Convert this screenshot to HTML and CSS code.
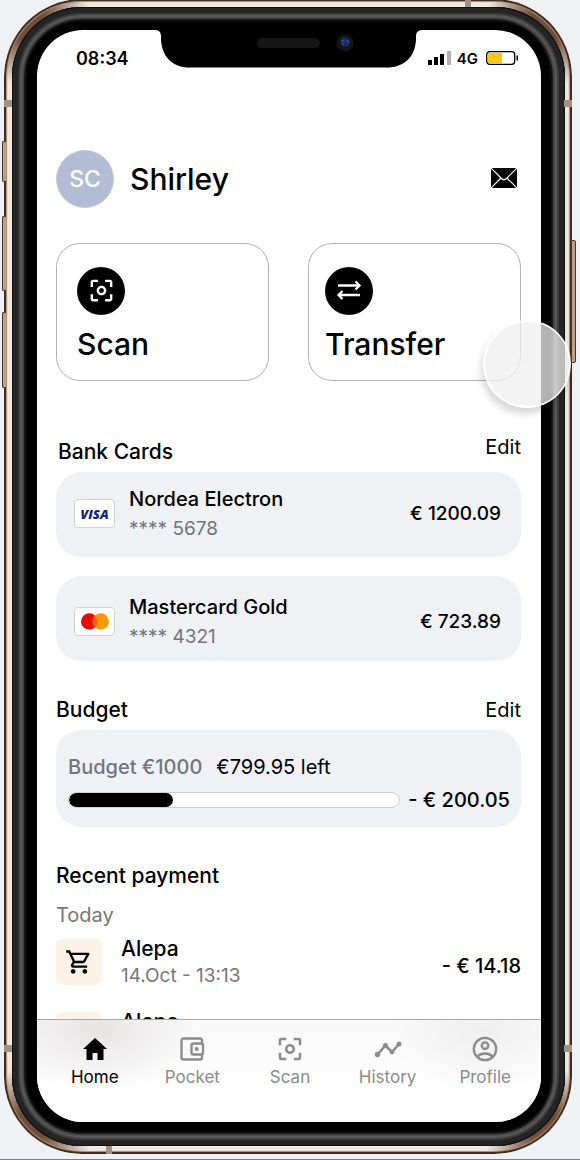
FILE: index.html
```html
<!DOCTYPE html>
<html lang="en">
<head>
<meta charset="utf-8">
<meta name="viewport" content="width=device-width, initial-scale=1">
<title>Wallet</title>
<link rel="stylesheet" href="styles.css">
</head>
<body>
<svg class="symbols" aria-hidden="true">
  <symbol id="focus" viewBox="0 0 24 24"><path d="M5 15H3v4c0 1.1.9 2 2 2h4v-2H5v-4zM5 5h4V3H5c-1.1 0-2 .9-2 2v4h2V5zm14-2h-4v2h4v4h2V5c0-1.1-.9-2-2-2zm0 16h-4v2h4c1.1 0 2-.9 2-2v-4h-2v4zM12 8c-2.21 0-4 1.79-4 4s1.79 4 4 4 4-1.79 4-4-1.79-4-4-4zm0 6c-1.1 0-2-.9-2-2s.9-2 2-2 2 .9 2 2-.9 2-2 2z"/></symbol>
  <symbol id="cart" viewBox="0 0 24 24"><path d="M15.55 13c.75 0 1.41-.41 1.75-1.03l3.58-6.49c.37-.66-.11-1.48-.87-1.48H5.21l-.94-2H1v2h2l3.6 7.59-1.35 2.44C4.52 15.37 5.48 17 7 17h12v-2H7l1.1-2h7.45zM6.16 6h12.15l-2.76 5H8.53L6.16 6zM7 18c-1.1 0-1.99.9-1.99 2S5.9 22 7 22s2-.9 2-2-.9-2-2-2zm10 0c-1.1 0-1.99.9-1.99 2s.89 2 1.99 2 2-.9 2-2-.9-2-2-2z"/></symbol>
</svg>
<div class="device">
  <span class="key key-mute"></span>
  <span class="key key-up"></span>
  <span class="key key-down"></span>
  <span class="key key-power"></span>
  <span class="seam seam-left-top"></span>
  <span class="seam seam-left-bottom"></span>
  <span class="seam seam-right-top"></span>
  <span class="seam seam-right-bottom"></span>
  <span class="seam seam-top"></span>
  <span class="seam seam-bottom"></span>
  <div class="bezel">
    <div class="screen">
      <svg class="notch" viewBox="0 0 268 38" aria-hidden="true">
        <path d="M0 0H268C263 0 261 2 261 7V10C260 27 249 37.500 232 37.500H34C18 37.500 7 27 6 10V7C6 2 4 0 0 0Z" fill="#000"/>
        <rect x="102" y="8" width="63" height="10" rx="5" fill="#161616"/>
        <circle cx="190" cy="13" r="8.500" fill="#14151a"/>
        <circle cx="190" cy="12" r="4.500" fill="#1c2c66"/>
        <path d="M186 11h3M192 10l2 3M187 14h2" stroke="#3c5cc0"/>
      </svg>
      <header class="status">
        <time class="clock">08:34</time>
        <div class="signals">
          <svg width="23" height="14" viewBox="0 0 23 14" aria-hidden="true">
            <path d="M0 9h4v5H0zM6 6h4v8H6zM12 3h4v11h-4z"/><path d="M19 0h4v14h-4z" fill="#b0b0b0"/>
          </svg>
          <span class="network">4G</span>
          <svg width="33" height="14" viewBox="0 0 33 14" aria-hidden="true">
            <rect x=".7" y=".7" width="28" height="12.600" rx="3" fill="#fff" stroke="#000" stroke-width="1.300"/>
            <path d="M3 2h13v10H3a1 1 0 0 1-1-1V3a1 1 0 0 1 1-1z" fill="#fac515"/><path d="M30.500 4.500h1.500v5h-1.500z"/>
          </svg>
        </div>
      </header>

      <main class="content">
        <div class="profile">
          <span class="avatar">SC</span>
          <h1 class="name">Shirley</h1>
          <button class="mail" aria-label="Messages">
            <svg width="26" height="20" viewBox="0 0 26 20"><path d="M0 0h26v20H0z"/><path class="line" d="M0 0l10.500 10.500Q13 13 15.500 10.500L26 0M0 20l9.500-9.500M26 20l-9.500-9.500" stroke="#fff" stroke-width="1.200"/></svg>
          </button>
        </div>

        <div class="actions">
          <button class="action">
            <span class="disc"><svg width="29" height="29"><use href="#focus"/></svg></span>
            <span>Scan</span>
          </button>
          <button class="action action-transfer">
            <span class="disc"><svg width="26" height="22" viewBox="0 0 26 22"><path class="line" d="M2 6.500h21M19.500 2.500l4 4-4 4M24 16H3M6.500 12l-4 4 4 4" stroke="#fff" stroke-width="2.300"/></svg></span>
            <span>Transfer</span>
          </button>
        </div>

        <section class="section cards">
          <div class="section-head">
            <h2 class="title">Bank Cards</h2>
            <button class="edit edit-high">Edit</button>
          </div>
          <div class="card-list">
            <article class="card">
              <span class="brand"><span class="visa">VISA</span></span>
              <div class="card-info"><h3 class="card-name">Nordea Electron</h3><p class="card-number">**** 5678</p></div>
              <span class="amount">€ 1200.09</span>
            </article>
            <article class="card">
              <span class="brand"><svg width="28" height="17" viewBox="0 0 28 17"><circle cx="8.300" cy="8.500" r="8.300" fill="#eb0a0a"/><circle cx="19.700" cy="8.500" r="8.300" fill="#f39a0b"/><path d="M14 2.500a8.300 8.300 0 0 1 0 12a8.300 8.300 0 0 1 0-12z" fill="#ff5f00"/></svg></span>
              <div class="card-info"><h3 class="card-name">Mastercard Gold</h3><p class="card-number">**** 4321</p></div>
              <span class="amount">€ 723.89</span>
            </article>
          </div>
        </section>

        <section class="section">
          <div class="section-head">
            <h2 class="title">Budget</h2>
            <button class="edit">Edit</button>
          </div>
          <div class="budget">
            <p class="budget-text"><label for="spent" class="budget-total">Budget €1000</label><span>€799.95 left</span></p>
            <div class="budget-row">
              <progress class="bar" id="spent" max="1000" value="316"></progress>
              <span class="amount">- € 200.05</span>
            </div>
          </div>
        </section>

        <section class="section recent">
          <h2 class="title">Recent payment</h2>
          <h3 class="day">Today</h3>
          <ul class="payments">
            <li class="payment">
              <span class="shop"><svg width="28" height="28"><use href="#cart"/></svg></span>
              <div class="payment-info"><p class="payee">Alepa</p><p class="date">14.Oct - 13:13</p></div>
              <span class="amount">- € 14.18</span>
            </li>
            <li class="payment">
              <span class="shop"><svg width="28" height="28"><use href="#cart"/></svg></span>
              <div class="payment-info"><p class="payee">Alepa</p></div>
            </li>
          </ul>
        </section>
      </main>

      <nav class="tabs">
        <a class="tab tab-active" href="#home">
          <svg width="30" height="30" viewBox="0 0 30 30"><path d="M15 4L27 15h-3.500v11h-6v-7h-5v7h-6V15H3z"/></svg>
          Home
        </a>
        <a class="tab" href="#pocket">
          <svg class="line" width="30" height="30" viewBox="0 0 30 30" stroke="currentColor" stroke-width="2.400"><path d="M25 9.500V6.500a2 2 0 0 0-2-2H6.500a2 2 0 0 0-2 2v17a2 2 0 0 0 2 2H23a2 2 0 0 0 2-2V20.500"/><rect x="14.500" y="9.500" width="11.500" height="11" rx="2"/><circle cx="19.700" cy="15" r=".9"/></svg>
          Pocket
        </a>
        <a class="tab" href="#scan">
          <svg width="30" height="30"><use href="#focus"/></svg>
          Scan
        </a>
        <a class="tab" href="#history">
          <svg width="30" height="30" viewBox="0 0 30 30"><path class="line" d="M4.500 20.500l8-9 6.500 6.500 7-8" stroke="currentColor" stroke-width="2.600"/><circle cx="4.500" cy="20.500" r="2.700"/><circle cx="12.500" cy="11.500" r="2.500"/><circle cx="19" cy="18" r="2.300"/><circle cx="26" cy="10" r="2.500"/></svg>
          History
        </a>
        <a class="tab" href="#profile">
          <svg class="line" width="30" height="30" viewBox="0 0 30 30" stroke="currentColor" stroke-width="2.300"><circle cx="15" cy="15" r="11.200"/><circle cx="15" cy="11.700" r="3.300"/><path d="M7.500 22.500C11 18.500 19 18.500 22.500 22.500"/></svg>
          Profile
        </a>
      </nav>
    </div>
  </div>
  <span class="touch"></span>
</div>
</body>
</html>
```
FILE: styles.css
```css
* { box-sizing: border-box; }

body {
  margin: 0;
  height: 100vh;
  padding: 0 8px 5px 4px;
  display: flex;
  background: #f0f1f5;
  border-bottom: 1px solid #7d7d80;
  font-family: Inter, "Noto Sans", sans-serif;
  font-size: 20px;
  color: #000;
  overflow: hidden;
}

h1, h2, h3, p, ul { margin: 0; padding: 0; font-weight: 500; font-size: inherit; }
ul { list-style: none; }
button { font: inherit; color: inherit; background: none; border: 0; padding: 0; cursor: pointer; }
svg { display: block; fill: currentColor; }
.line { fill: none; }
.symbols { position: absolute; width: 0; height: 0; }

/* Phone body */
.device {
  position: relative;
  flex: 1;
  min-width: 0;
  display: flex;
  margin-top: -1px;
  padding: 8px 7px 8px 8px;
  border-radius: 78px;
  background:
    radial-gradient(circle at 20px 20px, #704e3b 20px, transparent 66px),
    radial-gradient(circle at calc(100% - 20px) 20px, #704e3b 20px, transparent 66px),
    radial-gradient(circle at 20px calc(100% - 20px), #704e3b 20px, transparent 66px),
    radial-gradient(circle at calc(100% - 20px) calc(100% - 20px), #704e3b 20px, transparent 66px),
    #f1e8e0;
  box-shadow: inset 0 0 0 2px #3f2d22, inset 0 0 1px 3px #a58872;
}

.bezel {
  flex: 1;
  min-width: 0;
  display: flex;
  padding: 23px 24px 24px 25px;
  border-radius: 70px;
  background: #000;
  box-shadow:
    inset 0 0 0 1px #111,
    inset 0 0 0 6px #242424,
    inset 0 0 1px 8px #3c3c3c,
    inset 0 0 1px 10px #5a5a5a,
    inset 0 0 1px 12px #484848,
    inset 0 0 2px 14px #181818;
}

.screen {
  position: relative;
  flex: 1;
  min-width: 0;
  display: flex;
  flex-direction: column;
  overflow: hidden;
  border-radius: 46px;
  background: #fff;
}

.key {
  position: absolute;
  left: -2px;
  width: 4px;
  background: #c09e87;
  border: 1px solid #4a3529;
  border-right: 0;
  border-radius: 2px 0 0 2px;
}
.key-mute { top: 142px; height: 41px; }
.key-up { top: 217px; height: 75px; }
.key-down { top: 313px; height: 76px; }
.key-power { top: 241px; height: 123px; left: auto; right: -4px; width: 5px; border: 1px solid #4a3529; border-radius: 0 2px 2px 0; }

.seam { position: absolute; width: 8px; height: 7px; background: #a39182; }
.seam-left-top { left: 0; top: 101px; }
.seam-left-bottom { left: 0; bottom: 102px; }
.seam-right-top { right: 0; top: 101px; }
.seam-right-bottom { right: 0; bottom: 102px; }
.seam-top { width: 6px; height: 8px; top: 0; right: 101px; }
.seam-bottom { width: 6px; height: 8px; bottom: 0; left: 102px; }

.notch { position: absolute; z-index: 1; top: 0; left: 50%; width: 268px; height: 38px; margin-left: -134px; }

.touch {
  position: absolute;
  z-index: 2;
  top: 321px;
  right: 1px;
  width: 88px;
  height: 88px;
  border: 2px solid rgba(255, 255, 255, .95);
  border-radius: 50%;
  background: rgba(239, 239, 239, .75);
  background-clip: padding-box;
  box-shadow: -2px 6px 7px rgba(0, 0, 0, .16);
}

/* Status bar */
.status { flex: none; display: flex; justify-content: space-between; align-items: center; height: 56px; padding: 0 22px 0 39px; }
.clock { font-weight: 600; font-size: 18px; }
.signals { display: flex; align-items: center; gap: 6px; }
.network { font-weight: 600; font-size: 15px; }
.signals svg:last-child { margin-left: 2px; }

/* Scrolling page */
.content { flex: 1; min-height: 0; overflow-y: auto; scrollbar-width: none; padding: 64px 20px 0 19px; }

.profile { display: flex; align-items: center; gap: 16px; }
.avatar { display: flex; align-items: center; justify-content: center; width: 58px; height: 58px; border-radius: 50%; border: 1px solid #c8c8cc; background: #b2bdd5; color: #fff; font-size: 23px; font-weight: 500; }
.name { font-size: 30px; line-height: 40px; }
.mail { margin-left: auto; margin-right: 4px; padding-bottom: 2px; }

.actions { display: grid; grid-template-columns: 1fr 1fr; gap: 39px; margin-top: 35px; }
.action { display: flex; flex-direction: column; align-items: flex-start; gap: 8px; padding: 23px 20px 15px; border: 1px solid #b3b3b3; border-radius: 24px; font-size: 30px; line-height: 42px; font-weight: 500; }
.action-transfer { padding-left: 16px; }
.disc { display: flex; align-items: center; justify-content: center; width: 48px; height: 48px; padding-bottom: 2px; border-radius: 50%; background: #000; color: #fff; }

.section { margin-top: 29px; }
.cards { margin-top: 51px; }
.section-head { display: flex; justify-content: space-between; height: 40px; line-height: 40px; }
.title { font-size: 21px; }
.cards .title { padding-left: 2px; }
.edit-high { line-height: 30px; align-self: flex-start; }

.card-list { display: grid; gap: 19px; }
.card { display: flex; align-items: center; gap: 14px; height: 85px; padding: 0 20px 2px 18px; border-radius: 25px; background: #f0f1f5; }
.card + .card { padding-top: 6px; padding-bottom: 0; }
.brand { display: flex; align-items: center; justify-content: center; width: 41px; height: 29px; border: 1px solid #d2d2d2; border-radius: 4px; background: #fff; }
.visa { font: italic 800 13px "Open Sans", sans-serif; color: #17247a; }
.card-info { flex: 1; line-height: 29px; }
.card-number { color: #70757d; font-size: 19px; font-weight: 400; }
.amount { font-weight: 500; white-space: nowrap; }
.card .amount { font-size: 19px; }

.budget { padding: 22px 11px 12px 12px; border-radius: 25px; background: #f0f1f5; }
.budget-text { display: flex; gap: 14px; margin-bottom: 3px; line-height: 30px; font-weight: 400; }
.budget-total { color: #70757d; font-weight: 500; }
.budget-row { display: flex; align-items: center; gap: 8px; line-height: 30px; }
.bar { appearance: none; flex: 1; min-width: 0; height: 16px; border: 1px solid #cfcfcf; border-radius: 8px; background: #fff; overflow: hidden; }
.bar::-webkit-progress-bar { background: #fff; border-radius: 8px; }
.bar::-webkit-progress-value { background: #000; border-radius: 8px; }

.recent { margin-top: 34px; line-height: 30px; }
.day { margin-top: 9px; color: #777; font-weight: 400; }
.payments { display: grid; gap: 19px; margin-top: 5px; }
.payment { display: flex; align-items: flex-start; gap: 19px; line-height: 27px; }
.shop { display: flex; align-items: center; justify-content: center; width: 46px; height: 46px; margin-top: 4px; border-radius: 6px; background: #fdf2e7; }
.payment-info { flex: 1; }
.payee { font-size: 21px; font-weight: 500; }
.date { color: #777; font-size: 19px; font-weight: 400; }
.payment .amount { align-self: center; margin-top: 8px; }

/* Tab bar */
.tabs {
  flex: none;
  display: grid;
  grid-template-columns: repeat(5, 1fr);
  padding: 14px 7px 32px 9px;
  border-top: 1px solid #a8a8a8;
  background:
    radial-gradient(ellipse 100px 60px at 12% 10%, rgba(226, 222, 222, .8), transparent),
    radial-gradient(ellipse 90px 60px at 88% 10%, #efefef, transparent),
    linear-gradient(#f9f9f9, #fff 80%);
}
.tab { display: flex; flex-direction: column; align-items: center; color: #8c8c8c; font-size: 17px; line-height: 26px; text-decoration: none; }
.tab-active { color: #000; }
```
